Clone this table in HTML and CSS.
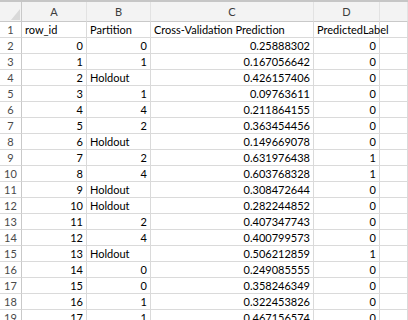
FILE: index.html
```html
<!DOCTYPE html>
<html>
<head>
<meta charset="utf-8">
<link rel="stylesheet" href="styles.css">
</head>
<body>
<div class="topbar"></div>
<div class="sheet">
  <div class="corner"><div class="tri"></div></div>
  <div class="colhdr">A</div><div class="colhdr">B</div><div class="colhdr">C</div><div class="colhdr">D</div><div class="colhdr"></div>

  <div class="rh">1</div><div class="c">row_id</div><div class="c">Partition</div><div class="c">Cross-Validation Prediction</div><div class="c">PredictedLabel</div><div class="c"></div>
  <div class="rh">2</div><div class="c n">0</div><div class="c n">0</div><div class="c n">0.25888302</div><div class="c n">0</div><div class="c"></div>
  <div class="rh">3</div><div class="c n">1</div><div class="c n">1</div><div class="c n">0.167056642</div><div class="c n">0</div><div class="c"></div>
  <div class="rh">4</div><div class="c n">2</div><div class="c">Holdout</div><div class="c n">0.426157406</div><div class="c n">0</div><div class="c"></div>
  <div class="rh">5</div><div class="c n">3</div><div class="c n">1</div><div class="c n">0.09763611</div><div class="c n">0</div><div class="c"></div>
  <div class="rh">6</div><div class="c n">4</div><div class="c n">4</div><div class="c n">0.211864155</div><div class="c n">0</div><div class="c"></div>
  <div class="rh">7</div><div class="c n">5</div><div class="c n">2</div><div class="c n">0.363454456</div><div class="c n">0</div><div class="c"></div>
  <div class="rh">8</div><div class="c n">6</div><div class="c">Holdout</div><div class="c n">0.149669078</div><div class="c n">0</div><div class="c"></div>
  <div class="rh">9</div><div class="c n">7</div><div class="c n">2</div><div class="c n">0.631976438</div><div class="c n">1</div><div class="c"></div>
  <div class="rh">10</div><div class="c n">8</div><div class="c n">4</div><div class="c n">0.603768328</div><div class="c n">1</div><div class="c"></div>
  <div class="rh">11</div><div class="c n">9</div><div class="c">Holdout</div><div class="c n">0.308472644</div><div class="c n">0</div><div class="c"></div>
  <div class="rh">12</div><div class="c n">10</div><div class="c">Holdout</div><div class="c n">0.282244852</div><div class="c n">0</div><div class="c"></div>
  <div class="rh">13</div><div class="c n">11</div><div class="c n">2</div><div class="c n">0.407347743</div><div class="c n">0</div><div class="c"></div>
  <div class="rh">14</div><div class="c n">12</div><div class="c n">4</div><div class="c n">0.400799573</div><div class="c n">0</div><div class="c"></div>
  <div class="rh">15</div><div class="c n">13</div><div class="c">Holdout</div><div class="c n">0.506212859</div><div class="c n">1</div><div class="c"></div>
  <div class="rh">16</div><div class="c n">14</div><div class="c n">0</div><div class="c n">0.249085555</div><div class="c n">0</div><div class="c"></div>
  <div class="rh">17</div><div class="c n">15</div><div class="c n">0</div><div class="c n">0.358246349</div><div class="c n">0</div><div class="c"></div>
  <div class="rh">18</div><div class="c n">16</div><div class="c n">1</div><div class="c n">0.322453826</div><div class="c n">0</div><div class="c"></div>
  <div class="rh">19</div><div class="c n">17</div><div class="c n">1</div><div class="c n">0.467156574</div><div class="c n">0</div><div class="c"></div>
</div>
</body>
</html>
```
FILE: styles.css
```css
html, body {
  margin: 0;
  padding: 0;
  background: #ffffff;
  overflow: hidden;
}
body {
  width: 408px;
  height: 320px;
  font-family: Lato, "Open Sans", "Liberation Sans", sans-serif;
  font-size: 11px;
  color: #000;
}
.topbar {
  height: 2px;
  background: #c6c6c6;
}
.sheet {
  display: grid;
  grid-template-columns: 22px 65px 64px 163px 66px 1fr;
  grid-template-rows: 20px;
  grid-auto-rows: 16px;
}
.sheet > div {
  box-sizing: border-box;
  border-right: 1px solid #dadada;
  border-bottom: 1px solid #dadada;
  white-space: nowrap;
  line-height: 15px;
}
.sheet > .corner {
  background: #f3f3f3;
  border-bottom-color: #c9c9c9;
  border-right-color: #c9c9c9;
  display: flex;
  justify-content: flex-end;
  align-items: flex-end;
}
.tri {
  width: 9px;
  height: 11px;
  margin: 0 1px 1px 0;
  background: #d9d9d9;
  clip-path: polygon(100% 0, 100% 100%, 0 100%);
}
.sheet > .colhdr {
  background: #f3f3f3;
  border-bottom-color: #c9c9c9;
  border-right-color: #e2e2e2;
  text-align: center;
  line-height: 19px;
  color: #3c3c3c;
}
.sheet > .rh {
  text-align: center;
  color: #4a4a4a;
  border-right-color: #c9c9c9;
  background: #ffffff;
}
.c {
  padding: 0 3px;
}
.n {
  text-align: right;
}
```
